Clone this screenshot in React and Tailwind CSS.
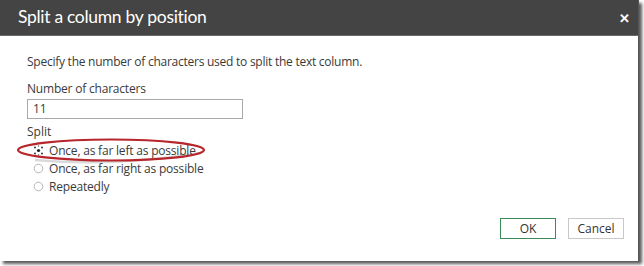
import React from "react";

function Radio({ selected }) {
  if (selected) {
    return (
      <svg width="11" height="11" viewBox="0 0 11 11" className="shrink-0">
        <circle cx="5.5" cy="5.5" r="1.6" fill="#222" />
        <circle cx="2" cy="2.5" r="0.9" fill="#222" />
        <circle cx="9" cy="2.5" r="0.9" fill="#222" />
        <circle cx="2" cy="8.5" r="0.9" fill="#222" />
        <circle cx="9" cy="8.5" r="0.9" fill="#222" />
        <circle cx="5.5" cy="1" r="0.7" fill="#555" />
        <circle cx="5.5" cy="10" r="0.7" fill="#555" />
      </svg>
    );
  }
  return (
    <svg width="11" height="11" viewBox="0 0 11 11" className="shrink-0">
      <circle cx="5.5" cy="5.5" r="4.3" fill="white" stroke="#b5b5b5" strokeWidth="1" />
    </svg>
  );
}

export default function App() {
  return (
    <div className="w-[644px] h-[266px] bg-white overflow-hidden" style={{ fontFamily: '"Open Sans", "Noto Sans", sans-serif' }}>
      <div className="relative w-[639px] h-[261px] bg-white flex flex-col shadow-[3px_3px_3px_rgba(0,0,0,0.65)] border-r border-[#555]">
        <div className="h-[36px] bg-[#444444] border-b border-[#6a6a6a] flex items-center justify-between pl-[18px] pr-[8px] shrink-0">
          <span className="text-[17.5px] text-white tracking-[-0.3px] leading-none pb-[1px]" style={{ fontFamily: 'Lato, "Open Sans", sans-serif' }}>Split a column by position</span>
          <span className="text-white text-[13px] font-bold leading-none mt-[1px]">✕</span>
        </div>
        <div className="flex flex-col pl-[27px] text-[12px] text-[#3a3a3a] leading-none">
          <div className="mt-[20px] tracking-[-0.25px]">Specify the number of characters used to split the text column.</div>
          <div className="mt-[15px] tracking-[-0.2px]">Number of characters</div>
          <div className="mt-[4px] w-[216px] h-[20px] border border-[#a9a9a9] flex items-center pl-[5px]">11</div>
          <div className="mt-[7px]">Split</div>
          <div className="flex flex-col pl-[6px] mt-[6px] gap-[5px] tracking-[-0.2px]">
            <div className="flex items-center gap-[5px] h-[13px]"><Radio selected /><span>Once, as far left as possible</span></div>
            <div className="flex items-center gap-[5px] h-[13px]"><Radio /><span>Once, as far right as possible</span></div>
            <div className="flex items-center gap-[5px] h-[13px]"><Radio /><span>Repeatedly</span></div>
          </div>
        </div>
        <div className="flex justify-end gap-[12px] pr-[14px] mt-auto mb-[22px] text-[12px] text-[#333]">
          <div className="w-[56px] h-[21px] border border-[#3c8a5a] flex items-center justify-center">OK</div>
          <div className="w-[56px] h-[21px] border border-[#c8c8c8] flex items-center justify-center">Cancel</div>
        </div>
        <svg className="absolute left-[15px] top-[136px]" width="192" height="30" viewBox="0 0 192 30">
          <path d="M20 24 Q96 31 186 17" fill="none" stroke="rgba(0,0,0,0.15)" strokeWidth="2.5" />
          <ellipse cx="96" cy="14" rx="93" ry="10.5" fill="none" stroke="#b7262b" strokeWidth="2.2" />
        </svg>
      </div>
    </div>
  );
}
